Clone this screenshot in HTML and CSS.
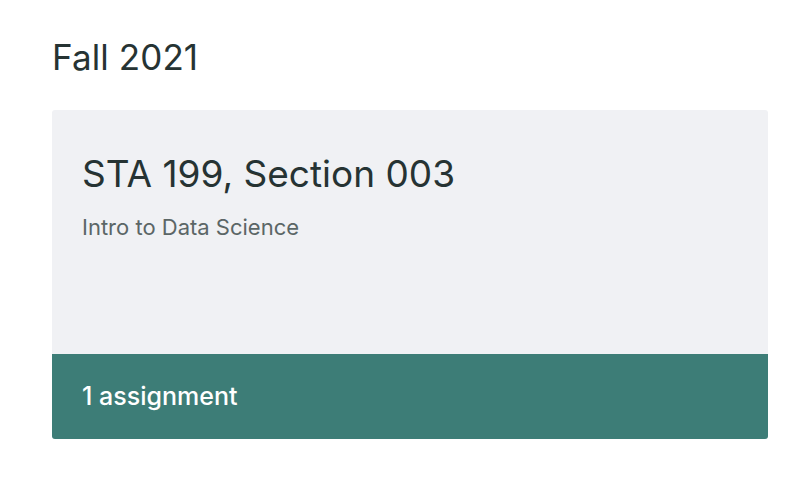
FILE: index.html
```html
<!DOCTYPE html>
<html>
<head>
<meta charset="utf-8">
<link rel="stylesheet" href="styles.css">
</head>
<body>
<main class="page">
  <h2 class="term">Fall 2021</h2>
  <a class="course-card" href="#">
    <div class="course-info">
      <h3 class="course-title">STA 199, Section 003</h3>
      <p class="course-desc">Intro to Data Science</p>
    </div>
    <div class="course-footer">1 assignment</div>
  </a>
</main>
</body>
</html>
```
FILE: styles.css
```css
html, body {
  margin: 0;
  padding: 0;
  background: #ffffff;
}
body {
  font-family: Inter, "Open Sans", sans-serif;
  font-variant-ligatures: none;
  color: #263333;
}
.page {
  padding: 37px 34px 0 52px;
}
.term {
  margin: 0 0 33px 0;
  font-size: 35px;
  font-weight: 400;
  line-height: 40px;
  letter-spacing: 0.1px;
  color: #263333;
}
.course-card {
  display: flex;
  flex-direction: column;
  width: 716px;
  height: 329px;
  border-radius: 3px;
  overflow: hidden;
  text-decoration: none;
  background: #f0f1f4;
}
.course-info {
  flex: 1;
  padding: 42px 30px 0 30px;
}
.course-title {
  margin: 0;
  font-size: 37px;
  font-weight: 400;
  line-height: 44px;
  color: #263333;
}
.course-desc {
  margin: 18px 0 0 0;
  font-size: 22px;
  line-height: 26px;
  color: #5b6666;
}
.course-footer {
  height: 85px;
  box-sizing: border-box;
  padding: 27px 30px 0 30px;
  background: #3d7d77;
  color: #ffffff;
  font-size: 25px;
  font-weight: 500;
  line-height: 30px;
}
```
